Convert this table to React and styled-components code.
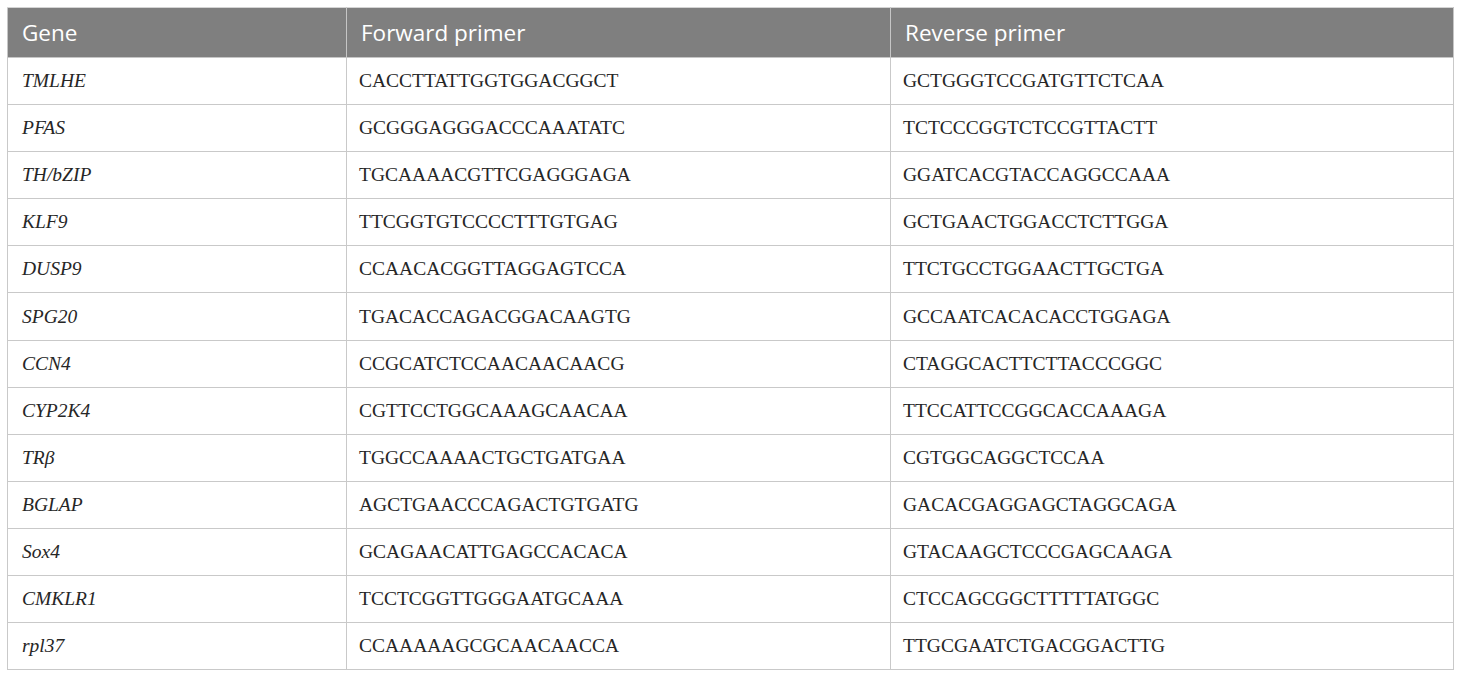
import React from "react";
import styled, { createGlobalStyle } from "styled-components";

const Global = createGlobalStyle`
  html, body { margin: 0; padding: 0; background: #ffffff; }
  body { font-family: "Liberation Serif", "Times New Roman", serif; }
`;

const Page = styled.div`
  padding: 7px 8px 0 7px;
`;

const Table = styled.table`
  width: 1446px;
  border-collapse: collapse;
  table-layout: fixed;
`;

const HeadCell = styled.th`
  background: #7f7f7f;
  color: #ffffff;
  font-family: "Open Sans", "Noto Sans", sans-serif;
  font-weight: 400;
  font-size: 22.5px;
  text-align: left;
  padding: 0 13px 0 14px;
  height: 49px;
  border: 1px solid #c6c6c6;
  border-top-color: #d4d4d4;
`;

const Cell = styled.td`
  color: #262626;
  font-family: "Liberation Serif", "Times New Roman", serif;
  font-size: 19.5px;
  font-style: ${(p) => (p.$italic ? "italic" : "normal")};
  padding: 0 13px 0 ${(p) => (p.$italic ? "14px" : "12px")};
  height: 46.1px;
  border: 1px solid #c9c9c9;
  white-space: nowrap;
`;

const rows = [
  ["TMLHE", "CACCTTATTGGTGGACGGCT", "GCTGGGTCCGATGTTCTCAA"],
  ["PFAS", "GCGGGAGGGACCCAAATATC", "TCTCCCGGTCTCCGTTACTT"],
  ["TH/bZIP", "TGCAAAACGTTCGAGGGAGA", "GGATCACGTACCAGGCCAAA"],
  ["KLF9", "TTCGGTGTCCCCTTTGTGAG", "GCTGAACTGGACCTCTTGGA"],
  ["DUSP9", "CCAACACGGTTAGGAGTCCA", "TTCTGCCTGGAACTTGCTGA"],
  ["SPG20", "TGACACCAGACGGACAAGTG", "GCCAATCACACACCTGGAGA"],
  ["CCN4", "CCGCATCTCCAACAACAACG", "CTAGGCACTTCTTACCCGGC"],
  ["CYP2K4", "CGTTCCTGGCAAAGCAACAA", "TTCCATTCCGGCACCAAAGA"],
  ["TRβ", "TGGCCAAAACTGCTGATGAA", "CGTGGCAGGCTCCAA"],
  ["BGLAP", "AGCTGAACCCAGACTGTGATG", "GACACGAGGAGCTAGGCAGA"],
  ["Sox4", "GCAGAACATTGAGCCACACA", "GTACAAGCTCCCGAGCAAGA"],
  ["CMKLR1", "TCCTCGGTTGGGAATGCAAA", "CTCCAGCGGCTTTTTATGGC"],
  ["rpl37", "CCAAAAAGCGCAACAACCA", "TTGCGAATCTGACGGACTTG"],
];

export default function App() {
  return (
    <Page>
      <Global />
      <Table>
        <colgroup>
          <col style={{ width: 339 }} />
          <col style={{ width: 544 }} />
          <col style={{ width: 563 }} />
        </colgroup>
        <thead>
          <tr>
            <HeadCell>Gene</HeadCell>
            <HeadCell>Forward primer</HeadCell>
            <HeadCell>Reverse primer</HeadCell>
          </tr>
        </thead>
        <tbody>
          {rows.map(([g, f, r]) => (
            <tr key={g}>
              <Cell $italic>{g}</Cell>
              <Cell>{f}</Cell>
              <Cell>{r}</Cell>
            </tr>
          ))}
        </tbody>
      </Table>
    </Page>
  );
}
